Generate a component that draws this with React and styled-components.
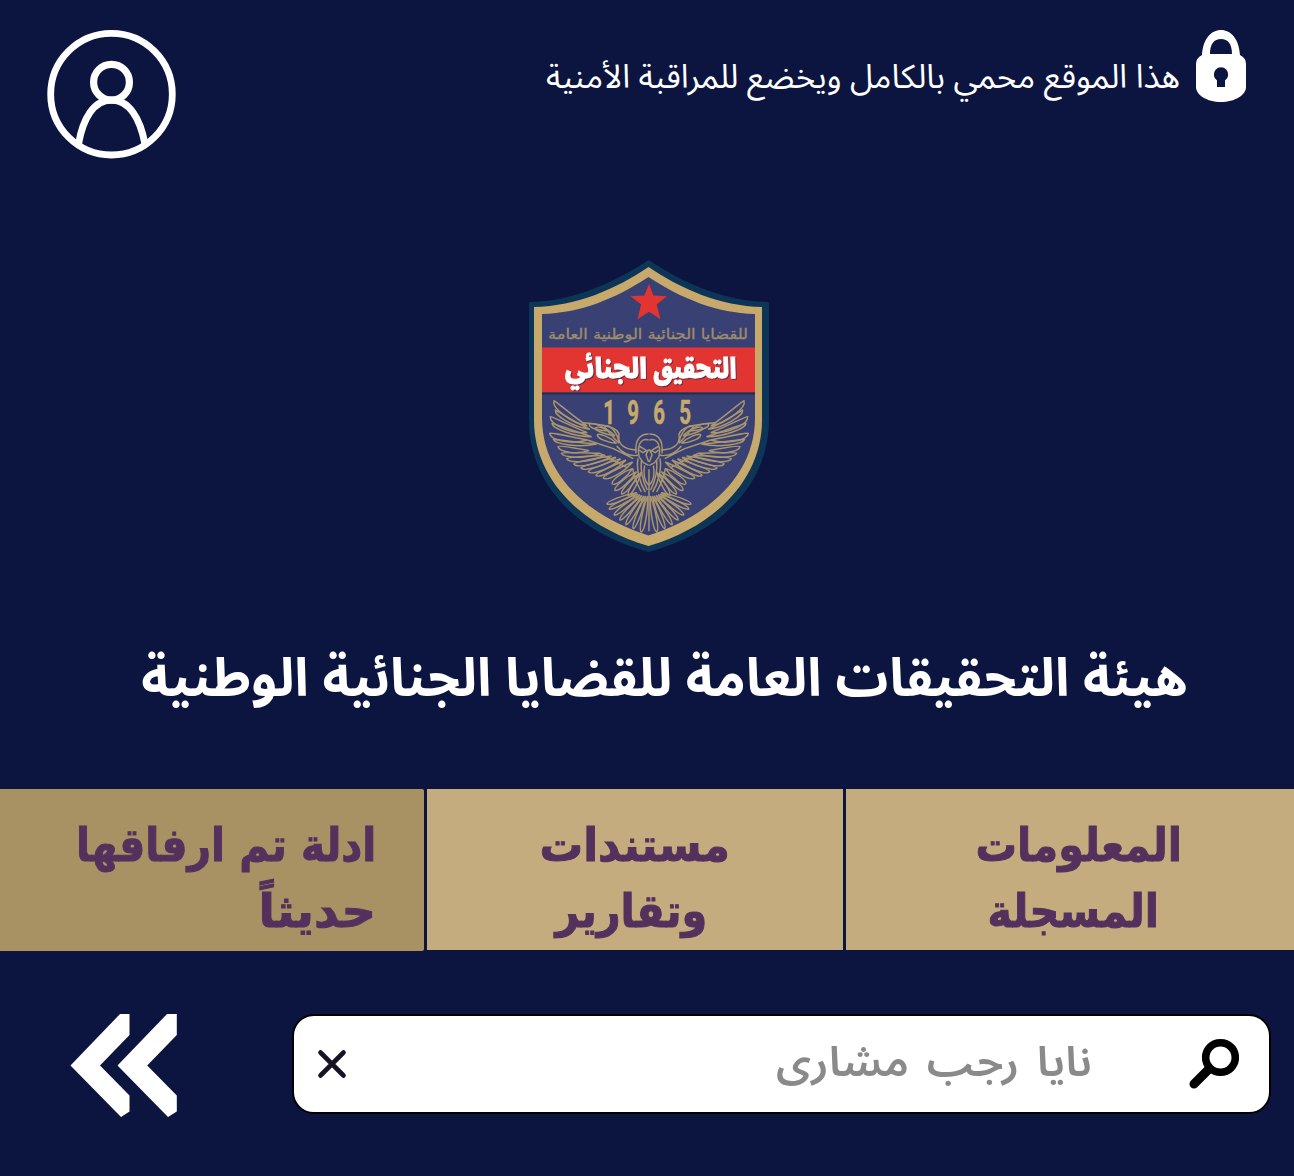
import React from "react";
import styled, { createGlobalStyle } from "styled-components";

const Global = createGlobalStyle`
  * { box-sizing: border-box; }
  html, body { margin: 0; padding: 0; background: #0c1540; }
  button { border: 0; padding: 0; background: none; color: inherit; font: inherit; }
`;

const Page = styled.main`
  width: 1294px;
  height: 1176px;
  overflow: hidden;
  display: flex;
  flex-direction: column;
  background: #0c1540;
  color: #fff;
  font-family: "Noto Sans Arabic", "Noto Sans", "DejaVu Sans", sans-serif;
`;

const Header = styled.header`
  height: 260px;
  padding: 30px 48px 0 47px;
  display: flex;
  justify-content: space-between;
  align-items: flex-start;
`;

const Notice = styled.div`
  display: flex;
  align-items: flex-start;
  gap: 16px;
`;

const Words = styled.span`
  display: block;
  white-space: nowrap;
  margin-left: ${(p) => p.$indent || 0}px;
  transform: scaleX(${(p) => p.$stretch || 1});
  transform-origin: ${(p) => p.$origin || "center"};
`;

const NoticeText = styled.p`
  margin: 0;
  padding-top: 23px;
  font-size: 33px;
  line-height: 50px;
`;

const Emblem = styled.div`
  height: 294px;
  display: flex;
  justify-content: center;
  padding-left: 3px;
`;

const Title = styled.h1`
  margin: 0;
  height: 235px;
  padding: 83px 0 0 34px;
  display: flex;
  justify-content: center;
  font-size: 53px;
  line-height: 84px;
  font-weight: 700;
`;

const Tabs = styled.nav`
  height: 162px;
  display: grid;
  grid-template-columns: 448px 416px 424px;
  column-gap: 3px;
`;

const Tab = styled.button`
  height: ${(p) => (p.$active ? 162 : 161)}px;
  padding-top: 23px;
  padding-right: ${(p) => p.$inset || 0}px;
  display: flex;
  flex-direction: column;
  align-items: ${(p) => (p.$active ? "flex-start" : "center")};
  background: ${(p) => (p.$active ? "#a89162" : "#c4ac7f")};
  border-radius: ${(p) => (p.$active ? "0 2px 2px 0" : "0")};
  color: #54315d;
  font-family: "DejaVu Sans", sans-serif;
  font-size: 46px;
  line-height: 66px;
  font-weight: 700;
  -webkit-text-stroke: 1px #54315d;
  stroke-linejoin: round;
  paint-order: stroke fill;
`;

const SearchRow = styled.section`
  flex: 1;
  padding: 63px 23px 0 70px;
  display: flex;
  justify-content: space-between;
  align-items: flex-start;
`;

const SearchBox = styled.div`
  width: 979px;
  height: 100px;
  padding: 0 30px 0 23px;
  display: flex;
  align-items: center;
  border: 2px solid #000;
  border-radius: 22px;
  background: #fff;
`;

const Query = styled.div`
  flex: 1;
  padding: 0 97px 2px 0;
  color: #8a8a8a;
  font-size: 42px;
  line-height: 60px;
  font-weight: 600;
  word-spacing: 6px;
`;

const Svg = styled.svg`
  display: block;
  flex: none;
`;

const BandText = styled.text`
  font-family: "Noto Sans Arabic", "DejaVu Sans", sans-serif;
  font-size: 28px;
  font-weight: 900;
  fill: #fff;
  stroke: #fff;
  stroke-width: 1px;
  filter: drop-shadow(1.5px 1.5px 0.4px #6b2c42);
`;

const leaf = ([tx, ty, rx, ry, w, bend = 0]) => {
  const dx = rx - tx;
  const dy = ry - ty;
  const len = Math.hypot(dx, dy);
  const nx = -dy / len;
  const ny = dx / len;
  const pt = (t, off) =>
    `${(tx + dx * t + nx * off).toFixed(1)} ${(ty + dy * t + ny * off).toFixed(1)}`;
  return `M${rx} ${ry}C${pt(0.6, w + bend)} ${pt(0.05, w + bend * 0.6)} ${tx} ${ty}C${pt(0.02, -w + bend * 0.6)} ${pt(0.6, -w + bend)} ${rx} ${ry}`;
};

const wing = [
  [162, 32, 262, 108, 11, 14], [166, 60, 270, 118, 8, 12],
  [151, 80, 262, 128, 12, 14], [156, 100, 275, 140, 8, 10],
  [149, 130, 262, 150, 12, 12], [160, 148, 290, 162, 8, 10],
  [174, 170, 268, 182, 10, 8], [184, 190, 300, 190, 9, 8],
  [200, 206, 315, 196, 10, 8], [222, 222, 335, 198, 10, 7],
  [243, 234, 348, 202, 9, 7], [265, 245, 362, 206, 10, 7],
  [288, 256, 378, 210, 9, 6], [310, 264, 398, 216, 10, 6],
  [268, 104, 325, 122, 9, 0], [285, 116, 345, 138, 9, -5],
  [315, 109, 357, 160, 10, -8], [292, 135, 350, 160, 9, 0],
  [337, 282, 398, 235, 11, 0], [345, 301, 410, 245, 10, 0],
  [365, 312, 418, 250, 9, 0], [385, 316, 425, 245, 8, 0],
];
const tail = [
  [321, 342, 410, 308, 8], [328, 357, 414, 312, 8], [343, 375, 420, 314, 8],
  [360, 390, 426, 316, 8], [378, 404, 432, 318, 8], [400, 416, 437, 318, 8],
  [424, 426, 443, 318, 9],
];

const Half = () => (
  <g>
    {[...wing, ...tail].map((f, i) => (
      <path key={i} d={leaf(f)} />
    ))}
    <path d="M245 98C275 100 295 102 310 106S350 112 357 132C352 160 368 178 410 180M350 168C370 192 390 200 414 196M262 150L340 176L400 206M300 190L380 232" />
    <path d="M414 205C408 240 420 280 436 306M424 212C420 250 432 280 442 300M434 226C428 255 436 275 446 286M398 235C402 265 416 290 424 306" />
    <path d="M408 190C403 138 430 132 446 132M417 200C410 155 428 145 446 150M417 168L440 182L428 188L418 180M446 178L438 194L446 216M417 200L430 218L446 226" />
  </g>
);

const Shield = () => (
  <Svg width="242" height="294" viewBox="528 260 242 294" role="img">
    <path fill="#0d3558" d="M648.5 260C617 281 575 301 531 302Q529 302 529 304V420C529 482 574 532 648.5 552C723 532 769 482 769 420V304Q769 302 767 302C722 301 680 281 648.5 260Z" />
    <path fill="#c7aa6b" d="M648.5 267C616 289 577 306 534 307V420C534 478 580 526 648.5 546C717 526 762 478 762 420V307C720 306 681 289 648.5 267Z" />
    <path fill="#394174" d="M648.5 277C615 299 580 313 542 314V418C542 473 585 515 648.5 535.5C712 515 755 473 755 418V314C717 313 682 299 648.5 277Z" />
    <path fill="#e23431" d="M649 284l4.4 11.4 13.6.8-10.3 8.2 3.8 14.8-11.5-7.4-11.5 7.4 3.6-14.8-10.5-8.2 13.8-.8z" />
    <path fill="#e23431" d="M542 347.5h213v45H542z" />
    <path fill="#173458" d="M542 392.5h213v2H542z" />
    <text x="648" y="338.5" textAnchor="middle" direction="rtl" textLength="200" lengthAdjust="spacingAndGlyphs" fontFamily="DejaVu Sans, sans-serif" fontSize="14" fill="#a08c69" stroke="#a08c69" strokeWidth=".3">للقضايا الجنائية الوطنية العامة</text>
    <BandText x="695" y="377.5" textAnchor="middle" direction="rtl" textLength="83" lengthAdjust="spacingAndGlyphs">التحقيق</BandText>
    <BandText x="606" y="377.5" textAnchor="middle" direction="rtl" textLength="82" lengthAdjust="spacingAndGlyphs">الجنائي</BandText>
    <g fill="#c7aa6b" stroke="#c7aa6b" strokeWidth=".6" fontFamily="Roboto, sans-serif" fontWeight="700" fontSize="33" textAnchor="middle">
      {[["1", 609], ["9", 633], ["6", 659], ["5", 685]].map(([n, x]) => (
        <text key={n} transform={`translate(${x} 424) scale(.62 1)`}>{n}</text>
      ))}
    </g>
    <g transform="translate(500 390) scale(.33333)" fill="none" stroke="#ab966d" strokeWidth="4.4" strokeLinejoin="round">
      <Half />
      <g transform="translate(894 0) scale(-1 1)"><Half /></g>
      <path d="M447 238V424" />
    </g>
  </Svg>
);

const UserIcon = () => (
  <Svg width="129" height="129" viewBox="0 0 129 129" fill="none" stroke="#fff" strokeWidth="6.8">
    <circle cx="64.5" cy="64.2" r="60.8" />
    <circle cx="64.5" cy="52.2" r="17.9" strokeWidth="7.2" />
    <path strokeWidth="7" d="M31.5 114C36 88 47 70 64.5 70S93 88 98 114" />
  </Svg>
);

const LockIcon = () => (
  <Svg width="50" height="72" viewBox="0 0 50 72">
    <path fill="#fff" fillRule="evenodd" d="M6 25C7 9 15 0 25 0S43 9 44 25Q50 28 50 34V57C50 65 39 72 25 72S0 65 0 57V34Q0 28 6 25ZM14 24H36C36 14 32 9 25 9S14 14 14 24ZM21 57H29V50.5A7.2 7.2 0 1 0 21 50.5Z" />
  </Svg>
);

const Chevrons = () => (
  <Svg width="108" height="104" viewBox="0 0 108 104" fill="#fff">
    <path d="M50 0H59.5V21L30 51.5L59.5 81.5V97.5L51 103L.5 51.5Z" />
    <path d="M97 0H106.8V21L77.2 51.5L106.8 81.5V97.5L98 103L47.5 51.5Z" />
  </Svg>
);

const SearchIcon = () => (
  <Svg width="50" height="52" viewBox="0 0 50 52" fill="none" stroke="#000">
    <circle cx="31.5" cy="19.5" r="14.8" strokeWidth="7.6" />
    <path d="M20 31L5 46" strokeWidth="9" strokeLinecap="round" />
  </Svg>
);

const ClearIcon = () => (
  <Svg width="30" height="30" viewBox="0 0 30 30" fill="none" stroke="#171322" strokeWidth="4.6" strokeLinecap="round">
    <path d="M3.5 3.5L26.5 26.5M26.5 3.5L3.5 26.5" />
  </Svg>
);

export default function App() {
  return (
    <>
      <Global />
      <Page dir="rtl">
        <Header dir="ltr">
          <UserIcon />
          <Notice>
            <NoticeText dir="rtl"><Words $origin="right">هذا الموقع محمي بالكامل ويخضع للمراقبة الأمنية</Words></NoticeText>
            <LockIcon />
          </Notice>
        </Header>
        <Emblem dir="ltr"><Shield /></Emblem>
        <Title><Words $stretch={0.994}>هيئة التحقيقات العامة للقضايا الجنائية الوطنية</Words></Title>
        <Tabs>
          <Tab>
            <Words $stretch={0.9} $indent={18}>المعلومات</Words>
            <Words $stretch={0.9} $indent={6}>المسجلة</Words>
          </Tab>
          <Tab>
            <Words $stretch={0.945}>مستندات</Words>
            <Words $stretch={0.9} $indent={-8}>وتقارير</Words>
          </Tab>
          <Tab $active $inset={48}>
            <Words $origin="right" $stretch={0.89}>ادلة تم ارفاقها</Words>
            <Words $origin="right" $stretch={1.04}>حديثاً</Words>
          </Tab>
        </Tabs>
        <SearchRow dir="ltr">
          <Chevrons />
          <SearchBox>
            <ClearIcon />
            <Query dir="rtl"><Words $origin="right" $stretch={1.05}>نايا رجب مشارى</Words></Query>
            <SearchIcon />
          </SearchBox>
        </SearchRow>
      </Page>
    </>
  );
}
